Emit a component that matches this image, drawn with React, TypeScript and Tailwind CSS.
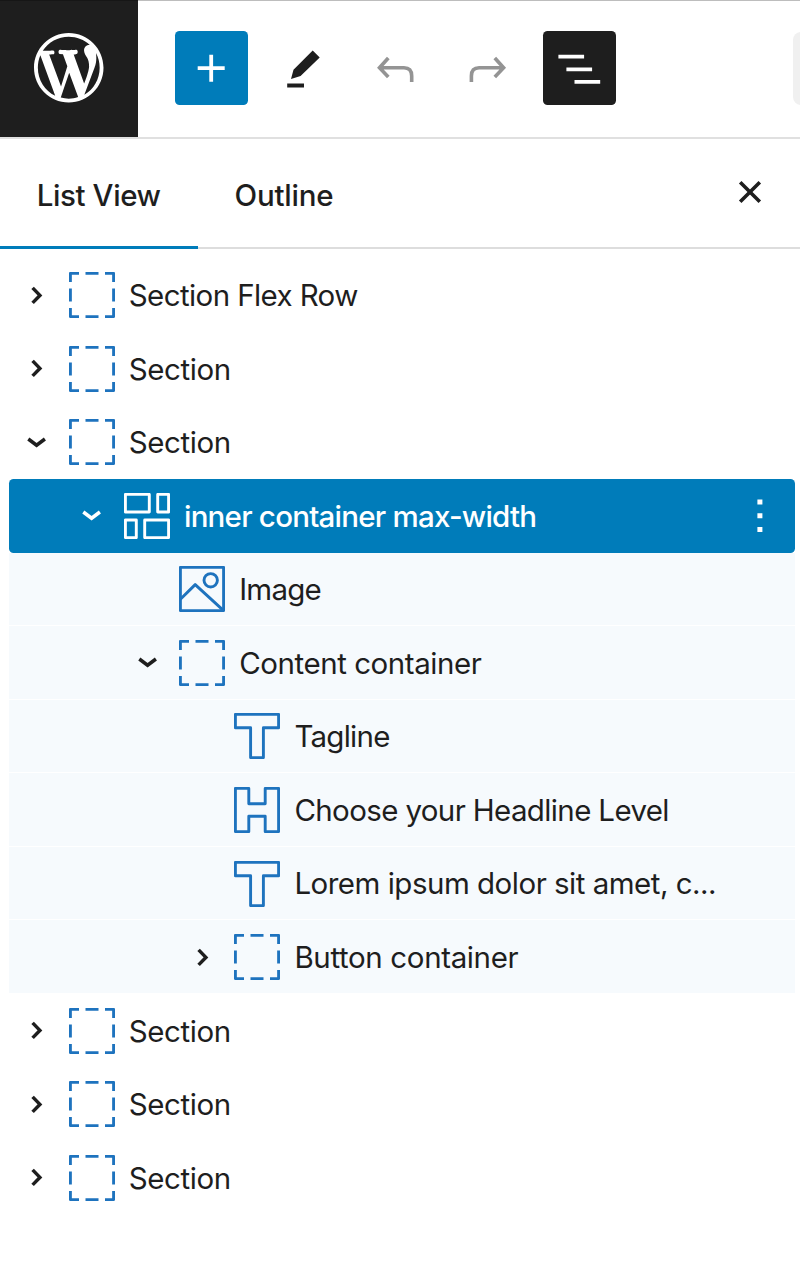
import { useState } from "react";
import type { ReactNode } from "react";
import clsx from "clsx";

type BlockIcon = "group" | "grid" | "image" | "text" | "heading";

interface Block {
  id: number;
  label: string;
  icon: BlockIcon;
  depth: number;
  expander?: "open" | "closed";
  // each label keeps its own tracking
  tracking: string;
  parentSelected?: boolean;
}

const blocks: Block[] = [
  { id: 1, label: "Section Flex Row", icon: "group", depth: 0, expander: "closed", tracking: "tracking-[-0.6px]" },
  { id: 2, label: "Section", icon: "group", depth: 0, expander: "closed", tracking: "tracking-[-0.4px]" },
  { id: 3, label: "Section", icon: "group", depth: 0, expander: "open", tracking: "tracking-[-0.4px]" },
  { id: 4, label: "inner container max-width", icon: "grid", depth: 1, expander: "open", tracking: "tracking-[-0.77px]" },
  { id: 5, label: "Image", icon: "image", depth: 2, tracking: "tracking-[-0.75px]", parentSelected: true },
  { id: 6, label: "Content container", icon: "group", depth: 2, expander: "open", tracking: "tracking-[-0.45px]", parentSelected: true },
  { id: 7, label: "Tagline", icon: "text", depth: 3, tracking: "tracking-[-0.75px]", parentSelected: true },
  { id: 8, label: "Choose your Headline Level", icon: "heading", depth: 3, tracking: "tracking-[-0.63px]", parentSelected: true },
  { id: 9, label: "Lorem ipsum dolor sit amet, c...", icon: "text", depth: 3, tracking: "tracking-[-0.5px]", parentSelected: true },
  { id: 10, label: "Button container", icon: "group", depth: 3, expander: "closed", tracking: "tracking-[-0.36px]", parentSelected: true },
  { id: 11, label: "Section", icon: "group", depth: 0, expander: "closed", tracking: "tracking-[-0.4px]" },
  { id: 12, label: "Section", icon: "group", depth: 0, expander: "closed", tracking: "tracking-[-0.4px]" },
  { id: 13, label: "Section", icon: "group", depth: 0, expander: "closed", tracking: "tracking-[-0.4px]" },
];

const indents = ["pl-0", "pl-[55.2px]", "pl-[110.4px]", "pl-[165.6px]"];

function WordPressLogo() {
  return (
    <svg viewBox="0 0 20 20" className="size-[69.5px]" fill="currentColor">
      <path d="M20 10c0-5.51-4.49-10-10-10C4.48 0 0 4.49 0 10c0 5.52 4.48 10 10 10 5.51 0 10-4.48 10-10zM7.78 15.37L4.37 6.22c.55-.02 1.17-.08 1.17-.08.5-.06.44-1.13-.06-1.11 0 0-1.45.11-2.37.11-.18 0-.37 0-.58-.01C4.12 2.69 6.87 1.11 10 1.11c2.33 0 4.45.87 6.05 2.34-.68-.11-1.65.39-1.65 1.58 0 .74.45 1.36.9 2.1.35.61.55 1.36.55 2.46 0 1.49-1.4 5-1.4 5l-3.03-8.37c.54-.02.82-.17.82-.17.5-.05.44-1.25-.06-1.22 0 0-1.44.12-2.38.12-.87 0-2.33-.12-2.33-.12-.5-.03-.56 1.2-.06 1.22l.92.08 1.26 3.41zM17.41 10c.24-.64.74-1.87.43-4.25.7 1.29 1.05 2.71 1.05 4.25 0 3.29-1.73 6.24-4.4 7.78.97-2.59 1.94-5.2 2.92-7.78zM6.1 18.09C3.12 16.65 1.11 13.53 1.11 10c0-1.3.23-2.48.72-3.59C3.25 10.3 4.67 14.2 6.1 18.09zm4.03-6.63l2.58 6.98c-.86.29-1.76.45-2.71.45-.79 0-1.57-.11-2.29-.33.81-2.38 1.62-4.74 2.42-7.1z" />
    </svg>
  );
}

function ToolbarButton({
  label,
  className,
  children,
}: {
  label: string;
  className?: string;
  children: ReactNode;
}) {
  return (
    <button
      type="button"
      aria-label={label}
      className={clsx("size-[73.6px] shrink-0 rounded-[4.6px]", className)}
    >
      <svg viewBox="0 0 73.6 73.6" className="size-full" fill="none">
        {children}
      </svg>
    </button>
  );
}

function Expander({ state }: { state?: "open" | "closed" }) {
  return (
    <svg
      viewBox="0 0 55 55"
      className="size-[55px] shrink-0"
      fill="none"
      stroke="currentColor"
      strokeWidth="3.5"
    >
      {state === "open" && <path d="M19.3 24L27.6 30.2L35.9 24" />}
      {state === "closed" && <path d="M23.6 19.9L30.9 27.4L23.6 34.9" />}
    </svg>
  );
}

function BlockGlyph({ icon }: { icon: BlockIcon }) {
  return (
    <svg
      viewBox="0 0 46 46"
      className="ml-[4.6px] size-[46px] shrink-0"
      fill="none"
      stroke="currentColor"
      strokeWidth="2.9"
      strokeLinejoin="round"
    >
      {icon === "group" && (
        <path d="M1.4 10V1.4H10M16.5 1.4H29.5M36 1.4H44.6V10M44.6 16.5V29.5M44.6 36V44.6H36M29.5 44.6H16.5M10 44.6H1.4V36M1.4 29.5V16.5" />
      )}
      {icon === "grid" && (
        <path d="M1.4 1.4H25.3V19H1.4zM33.7 1.4H44.6V19H33.7zM1.4 27H12.3V44.6H1.4zM20.7 27H44.6V44.6H20.7z" />
      )}
      {icon === "image" && (
        <>
          <path d="M1.4 1.4H44.6V44.6H1.4z" />
          <circle cx="31.7" cy="14.3" r="6.7" />
          <path d="M1.4 33.3L16.2 18.6L44.6 44.6" />
        </>
      )}
      {icon === "text" && (
        <path d="M1.4 1.4H44.6V14.8H29.4V44.6H16.6V14.8H1.4z" />
      )}
      {icon === "heading" && (
        <path d="M1.4 1.4H14.8V16.8H31.2V1.4H44.6V44.6H31.2V29.2H14.8V44.6H1.4z" />
      )}
    </svg>
  );
}

function Toolbar() {
  return (
    <header className="flex h-[139px] border-t border-b-2 border-t-[#bdbdbd] border-b-[#e0e0e0]">
      <div className="-mt-px flex h-[137px] w-[138px] shrink-0 items-center justify-center border-t border-t-[#161616] bg-[#1e1e1e] pb-[2px] text-white">
        <WordPressLogo />
      </div>
      <div className="flex flex-1 items-center gap-[18.4px] overflow-hidden pb-[1.6px] pl-[36.8px]">
        <ToolbarButton label="Toggle block inserter" className="bg-[#007cba]">
          <path d="M36.2 23.7V50.7M22.7 37.2H49.7" stroke="#fff" strokeWidth="3.8" />
        </ToolbarButton>
        <ToolbarButton label="Tools" className="text-[#1e1e1e]">
          <path
            fill="currentColor"
            d="M45.7 19.5L52.7 26.5L33.6 45.1L24 48L26.5 38.7zM20.2 52.5H37V56.6H20.2z"
          />
        </ToolbarButton>
        <ToolbarButton label="Undo" className="text-[#949494]">
          <path
            stroke="currentColor"
            strokeWidth="3.6"
            d="M29.3 27L20.5 36.8L29.3 46M20.5 36.8H45C50.4 36.8 52.7 40 52.7 45V51"
          />
        </ToolbarButton>
        <ToolbarButton label="Redo" className="text-[#949494]">
          <path
            stroke="currentColor"
            strokeWidth="3.6"
            d="M43.8 27L52.6 36.8L43.8 46M52.6 36.8H28.1C22.7 36.8 20.4 40 20.4 45V51"
          />
        </ToolbarButton>
        <ToolbarButton label="Document overview" className="bg-[#1e1e1e]">
          <path
            stroke="#fff"
            strokeWidth="3.8"
            d="M15.4 25.7H41.1M23.4 38.3H49.1M31.5 50.9H57.2"
          />
        </ToolbarButton>
        <div className="ml-[158.6px] h-[73px] w-10 shrink-0 rounded-[8px] bg-[#f0f0f0]" />
      </div>
    </header>
  );
}

function PanelTabs() {
  const [tab, setTab] = useState<"list" | "outline">("list");

  const tabClass = (active: boolean) =>
    clsx(
      "h-[110px] -mb-0.5 border-b-3 pt-[6px] text-[29.5px] font-medium",
      active ? "border-[#007cba]" : "border-transparent"
    );

  return (
    <div className="flex h-[110px] items-start border-b-2 border-[#dddddd]">
      <button
        type="button"
        onClick={() => setTab("list")}
        className={clsx(tabClass(tab === "list"), "w-[198px] pr-[37px] pl-[36.4px] whitespace-nowrap tracking-[-0.4px]")}
      >
        List View
      </button>
      <button
        type="button"
        onClick={() => setTab("outline")}
        className={clsx(tabClass(tab === "outline"), "pr-[37px] pl-[36.6px] tracking-[-0.22px]")}
      >
        Outline
      </button>
      <button type="button" aria-label="Close" className="mt-[41px] mr-[37.8px] ml-auto">
        <svg viewBox="0 0 24 24" className="size-6" fill="none" stroke="currentColor" strokeWidth="3.6">
          <path d="M2.2 2.2L21.8 21.8M21.8 2.2L2.2 21.8" />
        </svg>
      </button>
    </div>
  );
}

function BlockRow({ block, selected }: { block: Block; selected: boolean }) {
  return (
    <li
      className={clsx(
        "flex h-[73.55px] items-center",
        indents[block.depth],
        selected && "rounded-[4.6px] bg-[#007cba] text-white",
        block.parentSelected && "border-b border-white bg-[#f6fafd] pt-px"
      )}
    >
      <Expander state={block.expander} />
      <span className={clsx("flex", !selected && "text-[#1e73be]")}>
        <BlockGlyph icon={block.icon} />
      </span>
      <span
        className={clsx(
          "ml-[14px] whitespace-nowrap text-[29.5px]",
          selected ? "font-medium" : "font-normal",
          block.tracking
        )}
      >
        {block.label}
      </span>
      {selected && (
        <svg viewBox="0 0 6 34" className="mr-[32.8px] ml-auto h-[34px] w-[6px]" fill="currentColor">
          <path d="M.4 .6h5v5h-5zM.4 14.3h5v5h-5zM.4 28h5v5h-5z" />
        </svg>
      )}
    </li>
  );
}

export default function App() {
  return (
    <div className="h-[1265px] w-[800px] overflow-hidden bg-white font-['Inter','Liberation_Sans',sans-serif] text-[#1e1e1e]">
      <Toolbar />
      <PanelTabs />
      {/* block tree */}
      <ul className="pt-[9.4px] pr-[4.6px] pl-[9.2px]">
        {blocks.map((block) => (
          <BlockRow key={block.id} block={block} selected={block.id === 4} />
        ))}
      </ul>
    </div>
  );
}
